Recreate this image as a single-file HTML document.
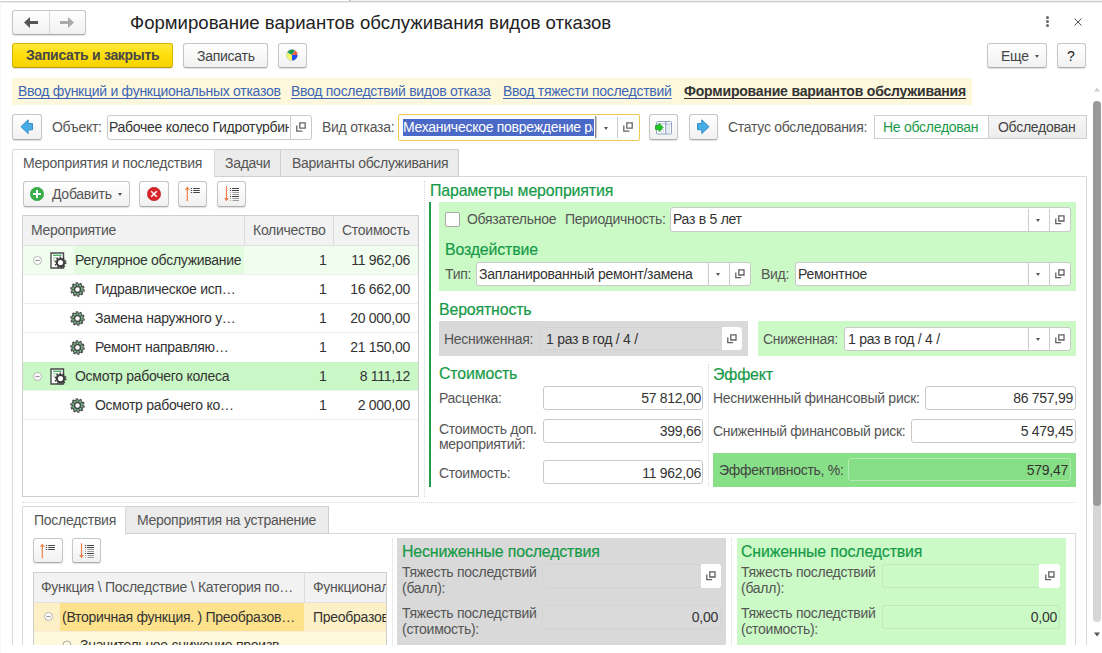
<!DOCTYPE html>
<html><head><meta charset="utf-8">
<style>
*{box-sizing:border-box;margin:0;padding:0}
html,body{width:1102px;height:653px;overflow:hidden;background:#fff;font-family:"Liberation Sans",sans-serif;font-size:14px;color:#555;letter-spacing:-0.27px}
.a{position:absolute;white-space:nowrap;line-height:13px}
.btn{position:absolute;border:1px solid #c6c6c6;border-bottom-color:#adadad;border-radius:3px;background:linear-gradient(#fff,#f1f1f1);box-shadow:0 1px 1px rgba(0,0,0,.12)}
.inp{position:absolute;border:1px solid #c9c9c9;border-radius:3px;background:#fff;overflow:hidden}
.gh{position:absolute;white-space:nowrap;color:#169a48;font-size:15.9px;line-height:15px;letter-spacing:-0.15px;-webkit-text-stroke:0.2px #169a48}
.lnk{color:#3d65b5;text-decoration:underline;text-decoration-skip-ink:none;text-decoration-thickness:1px;text-underline-offset:2px}
.val{color:#333}
.dd{position:absolute;width:0;height:0;border-left:2.5px solid transparent;border-right:2.5px solid transparent;border-top:3px solid #555}
.sep{position:absolute;width:1px;background:#cbcbcb}
.open{position:absolute;width:10px;height:10px}
</style></head><body>
<!-- frame -->
<div class="a" style="left:351px;top:0;width:751px;height:1px;background:#f2f2f2"></div><div class="a" style="left:349px;top:0;width:2px;height:1px;background:#c4c4c4"></div><div class="a" style="left:0;top:1px;width:1102px;height:1px;background:#d0d0d0"></div><div class="a" style="left:0;top:2px;width:1102px;height:1px;background:#ececec"></div>
<div class="a" style="left:0;top:2px;width:1px;height:651px;background:#f8f7ef"></div>

<!-- nav buttons -->
<div class="btn" style="left:12px;top:10px;width:74px;height:25px"></div>
<div class="a" style="left:49px;top:11px;width:1px;height:23px;background:#d8d8d8"></div>
<svg class="a" style="left:24px;top:17px" width="15" height="12" viewBox="0 0 15 12"><path d="M0 5.5 L6 0 L6 4 L14 4 L14 7 L6 7 L6 11 Z" fill="#555"/></svg>
<svg class="a" style="left:60px;top:17px" width="15" height="12" viewBox="0 0 15 12"><path d="M14 5.5 L8 0 L8 4 L0 4 L0 7 L8 7 L8 11 Z" fill="#aaa"/></svg>

<div class="a" style="left:130px;top:14px;font-size:18.6px;line-height:18px;color:#222;letter-spacing:0">Формирование вариантов обслуживания видов отказов</div>

<!-- right top icons -->
<div class="a" style="left:1046px;top:16px;width:3px;height:3px;border-radius:50%;background:#666"></div>
<div class="a" style="left:1046px;top:20px;width:3px;height:3px;border-radius:50%;background:#666"></div>
<div class="a" style="left:1046px;top:24px;width:3px;height:3px;border-radius:50%;background:#666"></div>
<svg class="a" style="left:1074px;top:18px" width="8" height="8" viewBox="0 0 8 8"><path d="M0.5 0.5 L7.5 7.5 M7.5 0.5 L0.5 7.5" stroke="#555" stroke-width="1"/></svg>

<!-- toolbar -->
<div class="btn" style="left:12px;top:43px;width:161px;height:25px;background:linear-gradient(#ffe83a,#ffde0a 50%,#f6d200);border-color:#d7b500;border-bottom-color:#b99b00"></div>
<div class="a" style="left:26px;top:49px;font-weight:bold;color:#474747;letter-spacing:-.3px">Записать и закрыть</div>
<div class="btn" style="left:183px;top:43px;width:85px;height:25px"></div>
<div class="a" style="left:197px;top:50px;color:#444">Записать</div>
<div class="btn" style="left:278px;top:43px;width:29px;height:25px"></div>
<svg class="a" style="left:286px;top:49px" width="12" height="12" viewBox="0 0 12 12"><path d="M6 6 L8.75 1.24 A5.5 5.5 0 0 1 11.5 6 Z" fill="#f55a45"/><path d="M6 6 L11.5 6 A5.5 5.5 0 0 1 6 11.5 Z" fill="#2250ee"/><path d="M6 6 L6 11.5 A5.5 5.5 0 0 1 1.24 3.25 Z" fill="#fbf76a"/><path d="M6 6 L1.24 3.25 A5.5 5.5 0 0 1 8.75 1.24 Z" fill="#1d9a52"/><circle cx="6" cy="6" r="5.6" fill="none" stroke="#7a8a9a" stroke-width="0.5" opacity=".6"/></svg>

<div class="btn" style="left:987px;top:43px;width:60px;height:25px"></div>
<div class="a" style="left:1001px;top:50px;color:#444">Еще</div>
<div class="dd" style="left:1035px;top:55px"></div>
<div class="btn" style="left:1057px;top:43px;width:29px;height:25px"></div>
<div class="a" style="left:1067px;top:50px;color:#222;font-size:14px">?</div>

<!-- yellow nav band -->
<div class="a" style="left:12px;top:78px;width:960px;height:27px;background:#fdf8dc"></div>
<div class="a lnk" style="left:18px;top:85px">Ввод функций и функциональных отказов</div>
<div class="a lnk" style="left:291px;top:85px">Ввод последствий видов отказа</div>
<div class="a lnk" style="left:503px;top:85px">Ввод тяжести последствий</div>
<div class="a" style="left:684px;top:85px;font-weight:bold;color:#333;text-decoration:underline;text-decoration-skip-ink:none;text-underline-offset:2px;letter-spacing:-.19px">Формирование вариантов обслуживания</div>

<!-- scrollbar -->
<svg class="a" style="left:1094px;top:87px" width="6" height="5"><path d="M0 4.5 L3 0.5 L6 4.5Z" fill="#cfcfcf"/></svg>
<div class="a" style="left:1093px;top:101px;width:8px;height:521px;border-radius:4px;background:#d6d6d6"></div>
<div class="a" style="left:1093px;top:101px;width:8px;height:405px;border-radius:4px;background:#9a9a9a"></div>
<svg class="a" style="left:1094px;top:632px" width="6" height="5"><path d="M0 0.5 L3 4.5 L6 0.5Z" fill="#555"/></svg>

<!-- object row -->
<div class="btn" style="left:12px;top:114px;width:30px;height:26px"></div>
<svg class="a" style="left:20px;top:119px" width="14" height="16" viewBox="0 0 14 16"><path d="M12.5 4.6 H8.2 V0.8 L1.4 7.2 Q0.9 7.7 1.4 8.2 L8.2 14.6 V10.8 H12.5 Z" fill="#46ade6" stroke="#2a86c2" stroke-width="0.9" stroke-linejoin="round"/></svg>
<div class="a" style="left:52px;top:121px">Объект:</div>
<div class="inp" style="left:107px;top:115px;width:205px;height:25px"></div><div class="sep" style="left:290px;top:116px;height:23px"></div>
<div class="a val" style="left:109px;top:121px;width:180px;overflow:hidden">Рабочее колесо Гидротурбины</div>
<svg class="open" style="left:296px;top:122px" viewBox="0 0 10 10"><path d="M3.8 0.8h5.4v5.4h-5.4z M0.8 3.6v5.6h5.6" fill="none" stroke="#666" stroke-width="1.3"/></svg>
<div class="a" style="left:322px;top:121px">Вид отказа:</div>
<div class="a" style="left:398px;top:114px;width:242px;height:27px;border:1px solid #f0c94a;background:#fff;border-radius:2px"></div>
<div class="a" style="left:403px;top:119px;width:191px;height:17px;background:#4b69c6"></div><div class="a" style="left:595px;top:116px;width:1px;height:22px;background:#8a8a8a"></div>
<div class="a" style="left:403px;top:121px;color:#fff;width:190px;overflow:hidden">Механическое повреждение рабочего</div>
<div class="sep" style="left:596px;top:117px;height:21px"></div>
<div class="dd" style="left:604px;top:127px"></div>
<div class="sep" style="left:617px;top:117px;height:21px"></div>
<svg class="open" style="left:623px;top:122px" viewBox="0 0 10 10"><path d="M3.8 0.8h5.4v5.4h-5.4z M0.8 3.6v5.6h5.6" fill="none" stroke="#666" stroke-width="1.3"/></svg>
<div class="btn" style="left:649px;top:114px;width:29px;height:26px"></div>
<svg class="a" style="left:655px;top:121px" width="17" height="14" viewBox="0 0 17 14"><rect x="1.5" y="0.5" width="15" height="12.5" rx="1" fill="#fff" stroke="#8ea2c2"/><path d="M2 3h14" stroke="#b9c6da" stroke-width="1.2"/><path d="M10.8 1v12" stroke="#8ea2c2" stroke-width="1.2"/><path d="M12.5 5h2.5M12.5 7h2.5M12.5 9h2.5M12.5 11h2.5M6 9h3M6 11h3" stroke="#8ea2c2" stroke-width="0.8" stroke-dasharray="1 0.8"/><path d="M0.5 4.5h3.5V2.3l4.2 4.2-4.2 4.2V8.5H0.5z" fill="#1ec81e" stroke="#0f8f1a" stroke-width="0.7" stroke-linejoin="round"/></svg>
<div class="btn" style="left:689px;top:114px;width:29px;height:26px"></div>
<svg class="a" style="left:696px;top:119px" width="14" height="16" viewBox="0 0 14 16"><path d="M1.5 4.6 H5.8 V0.8 L12.6 7.2 Q13.1 7.7 12.6 8.2 L5.8 14.6 V10.8 H1.5 Z" fill="#46ade6" stroke="#2a86c2" stroke-width="0.9" stroke-linejoin="round"/></svg>
<div class="a" style="left:728px;top:121px">Статус обследования:</div>
<div class="a" style="left:874px;top:115px;width:213px;height:24px;border:1px solid #cfcfcf;background:#fff"></div>
<div class="a" style="left:988px;top:116px;width:98px;height:22px;background:linear-gradient(#f6f6f6,#ececec);border-left:1px solid #cfcfcf"></div>
<div class="a" style="left:883px;top:121px;color:#1b9a4a">Не обследован</div>
<div class="a" style="left:998px;top:121px;color:#444">Обследован</div>

<!-- main tab panel -->
<div class="a" style="left:12px;top:176px;width:1075px;height:477px;border:1px solid #d9d9d9;border-bottom:none"></div>
<div class="a" style="left:12px;top:149px;width:203px;height:28px;border:1px solid #d9d9d9;border-bottom:none;background:#fff;border-radius:2px 2px 0 0"></div>
<div class="a" style="left:215px;top:149px;width:66px;height:28px;border:1px solid #cfcfcf;border-left:none;background:#ececec"></div>
<div class="a" style="left:281px;top:149px;width:178px;height:28px;border:1px solid #cfcfcf;border-left:none;background:#ececec"></div>
<div class="a" style="left:23px;top:157px">Мероприятия и последствия</div>
<div class="a" style="left:225px;top:157px">Задачи</div>
<div class="a" style="left:292px;top:157px">Варианты обслуживания</div>

<svg width="0" height="0" style="position:absolute">
<defs>
<g id="gear"><circle cx="7.5" cy="7.5" r="6.7" fill="none" stroke="#474747" stroke-width="1.2" stroke-dasharray="2.4 1.81"/><circle cx="7.5" cy="7.5" r="6.2" fill="#474747"/><circle cx="7.5" cy="7.5" r="4.5" fill="none" stroke="#76c08a" stroke-width="1.7" stroke-dasharray="2 0.8"/><circle cx="7.5" cy="7.5" r="3.2" fill="#474747"/><circle cx="7.5" cy="7.5" r="2.2" fill="#fff"/></g>
<g id="docgear"><path d="M1 1h12.5v15H1z" fill="#fff" stroke="#4a4a4a" stroke-width="1.4"/><path d="M3 3.3h8.5" stroke="#4bb36a" stroke-width="1.4"/><path d="M3 5.8h5M3 8h2" stroke="#8ccf9d" stroke-width="1.1"/><circle cx="10.5" cy="10.6" r="5.3" fill="none" stroke="#3a3a3a" stroke-width="1.4" stroke-dasharray="1.6 1.73"/><circle cx="10.5" cy="10.6" r="4.7" fill="#3a3a3a"/><circle cx="10.5" cy="10.6" r="2.6" fill="#fff"/></g>
<g id="minus"><circle cx="4.5" cy="4.5" r="4" fill="#fff" stroke="#b5b5b5" stroke-width="1"/><path d="M2.3 4.5h4.4" stroke="#9a9a9a" stroke-width="1.2"/></g>
<g id="openi"><path d="M3.8 0.8h5.2v5.2h-5.2z M0.8 3.4v5.3h5.3" fill="none" stroke="#606060" stroke-width="1.3"/></g>
<g id="sortup"><path d="M4.3 2.5v12.7" stroke="#f0804a" stroke-width="1.2"/><path d="M1.9 3.8 L4.3 0.4 L6.7 3.8Z" fill="#f0804a"/><path d="M7.8 2.5h1.3M7.8 4.5h1.3M7.8 6.5h1.3" stroke="#444" stroke-width="1.1"/><path d="M10.2 2.5h6.6M10.2 4.5h6.6M10.2 6.5h6.6" stroke="#444" stroke-width="1.2"/></g>
<g id="sortdn"><path d="M4.5 0.3v12.5" stroke="#f0804a" stroke-width="1.2"/><path d="M2.1 12 L4.5 15.3 L6.9 12Z" fill="#f0804a"/><path d="M7.9 2.5h1.2M7.9 4.5h1.2M7.9 10.5h1.2" stroke="#444" stroke-width="1.1"/><path d="M10 2.5h7M10 4.5h7M10 10.5h7" stroke="#444" stroke-width="1.2"/><path d="M8.2 6.5h.9M8.2 8.5h.9M8.2 12.5h.9M8.2 14.5h.9M10.5 6.5h6.5M10.5 8.5h6.5M10.5 12.5h6.5M10.5 14.5h6.5" stroke="#9a9a9a" stroke-width="1"/></g>
</defs></svg>

<!-- toolbar tab1 -->
<div class="btn" style="left:23px;top:181px;width:107px;height:26px"></div>
<svg class="a" style="left:30px;top:187px" width="14" height="14" viewBox="0 0 14 14"><circle cx="7" cy="7" r="6.7" fill="#3aae48" stroke="#2f9a3e" stroke-width=".6"/><path d="M7 3v8M3 7h8" stroke="#fff" stroke-width="2"/></svg>
<div class="a" style="left:52px;top:188px">Добавить</div>
<div class="dd" style="left:118px;top:193px"></div>
<div class="btn" style="left:139px;top:181px;width:30px;height:26px"></div>
<svg class="a" style="left:147px;top:187px" width="14" height="14" viewBox="0 0 14 14"><circle cx="7" cy="7" r="6.7" fill="#d8262b" stroke="#b81d22" stroke-width=".6"/><path d="M4.2 4.2l5.6 5.6M9.8 4.2l-5.6 5.6" stroke="#fff" stroke-width="1.5"/></svg>
<div class="btn" style="left:178px;top:181px;width:29px;height:26px"></div>
<svg class="a" style="left:183px;top:186px" width="19" height="16"><use href="#sortup"/></svg>
<div class="btn" style="left:217px;top:181px;width:29px;height:26px"></div>
<svg class="a" style="left:222px;top:186px" width="19" height="16"><use href="#sortdn"/></svg>

<!-- left table -->
<div class="a" style="left:22px;top:215px;width:397px;height:282px;border:1px solid #cfcfcf;background:#fff"></div>
<div class="a" style="left:23px;top:216px;width:395px;height:30px;background:#f2f2f2;border-bottom:1px solid #e2e2e2"></div>
<div class="a" style="left:244px;top:216px;width:1px;height:29px;background:#dcdcdc"></div>
<div class="a" style="left:333px;top:216px;width:1px;height:29px;background:#dcdcdc"></div>
<div class="a" style="left:31px;top:224px">Мероприятие</div>
<div class="a" style="left:253px;top:224px">Количество</div>
<div class="a" style="left:342px;top:224px">Стоимость</div>

<div class="a" style="left:23px;top:246px;width:395px;height:28px;background:#f1fdef"></div>
<div class="a" style="left:74px;top:246px;width:170px;height:28px;background:#e3fcdf"></div>
<div class="a" style="left:23px;top:274px;width:395px;height:1px;background:#eeeeee"></div>
<div class="a" style="left:23px;top:303px;width:395px;height:1px;background:#eeeeee"></div>
<div class="a" style="left:23px;top:332px;width:395px;height:1px;background:#eeeeee"></div>
<div class="a" style="left:23px;top:362px;width:395px;height:29px;background:#c9f7c5"></div>
<div class="a" style="left:23px;top:390px;width:395px;height:1px;background:#e6f5e4"></div>
<div class="a" style="left:23px;top:419px;width:395px;height:1px;background:#eeeeee"></div>

<svg class="a" style="left:33px;top:256px" width="10" height="10"><use href="#minus"/></svg>
<svg class="a" style="left:50px;top:252px" width="17" height="17"><use href="#docgear"/></svg>
<div class="a val" style="left:75px;top:254px">Регулярное обслуживание</div>
<div class="a val" style="left:319px;top:254px">1</div>
<div class="a val" style="left:340px;top:254px;width:70px;text-align:right">11 962,06</div>

<svg class="a" style="left:70px;top:282px" width="15" height="15"><use href="#gear"/></svg>
<div class="a val" style="left:95px;top:283px">Гидравлическое исп…</div>
<div class="a val" style="left:319px;top:283px">1</div>
<div class="a val" style="left:340px;top:283px;width:70px;text-align:right">16 662,00</div>

<svg class="a" style="left:70px;top:311px" width="15" height="15"><use href="#gear"/></svg>
<div class="a val" style="left:95px;top:312px">Замена наружного у…</div>
<div class="a val" style="left:319px;top:312px">1</div>
<div class="a val" style="left:340px;top:312px;width:70px;text-align:right">20 000,00</div>

<svg class="a" style="left:70px;top:340px" width="15" height="15"><use href="#gear"/></svg>
<div class="a val" style="left:95px;top:341px">Ремонт направляю…</div>
<div class="a val" style="left:319px;top:341px">1</div>
<div class="a val" style="left:340px;top:341px;width:70px;text-align:right">21 150,00</div>

<svg class="a" style="left:33px;top:372px" width="10" height="10"><use href="#minus"/></svg>
<svg class="a" style="left:50px;top:368px" width="17" height="17"><use href="#docgear"/></svg>
<div class="a val" style="left:75px;top:370px">Осмотр рабочего колеса</div>
<div class="a val" style="left:319px;top:370px">1</div>
<div class="a val" style="left:340px;top:370px;width:70px;text-align:right">8 111,12</div>

<svg class="a" style="left:70px;top:398px" width="15" height="15"><use href="#gear"/></svg>
<div class="a val" style="left:95px;top:399px">Осмотр рабочего ко…</div>
<div class="a val" style="left:319px;top:399px">1</div>
<div class="a val" style="left:340px;top:399px;width:70px;text-align:right">2 000,00</div>

<!-- separators -->
<div class="a" style="left:424px;top:181px;width:1px;height:316px;border-left:1px dotted #d8d8d8"></div>
<div class="a" style="left:22px;top:502px;width:1054px;height:1px;border-top:1px dotted #d8d8d8"></div>

<!-- right params -->
<div class="gh" style="left:430px;top:183px">Параметры мероприятия</div>
<div class="a" style="left:429px;top:202px;width:2px;height:285px;background:#1f9d4b"></div>
<div class="a" style="left:439px;top:202px;width:637px;height:89px;background:#cbfac6"></div>
<div class="a" style="left:445px;top:212px;width:15px;height:15px;border:1px solid #a9a9a9;border-radius:2px;background:#fff"></div>
<div class="a" style="left:467px;top:213px">Обязательное</div>
<div class="a" style="left:565px;top:213px">Периодичность:</div>
<div class="inp" style="left:670px;top:207px;width:401px;height:25px"></div>
<div class="a val" style="left:673px;top:213px">Раз в 5 лет</div>
<div class="sep" style="left:1028px;top:209px;height:22px"></div>
<div class="dd" style="left:1036px;top:219px"></div>
<div class="sep" style="left:1049px;top:209px;height:22px"></div>
<svg class="open" style="left:1055px;top:215px" viewBox="0 0 10 10"><use href="#openi"/></svg>

<div class="gh" style="left:445px;top:242px">Воздействие</div>
<div class="a" style="left:445px;top:268px">Тип:</div>
<div class="inp" style="left:476px;top:262px;width:275px;height:24px"></div>
<div class="a val" style="left:479px;top:268px">Запланированный ремонт/замена</div>
<div class="sep" style="left:708px;top:263px;height:22px"></div>
<div class="dd" style="left:716px;top:273px"></div>
<div class="sep" style="left:729px;top:263px;height:22px"></div>
<svg class="open" style="left:735px;top:269px" viewBox="0 0 10 10"><use href="#openi"/></svg>
<div class="a" style="left:761px;top:268px">Вид:</div>
<div class="inp" style="left:795px;top:262px;width:276px;height:24px"></div>
<div class="a val" style="left:798px;top:268px">Ремонтное</div>
<div class="sep" style="left:1028px;top:263px;height:22px"></div>
<div class="dd" style="left:1036px;top:273px"></div>
<div class="sep" style="left:1049px;top:263px;height:22px"></div>
<svg class="open" style="left:1055px;top:269px" viewBox="0 0 10 10"><use href="#openi"/></svg>

<div class="gh" style="left:439px;top:302px">Вероятность</div>
<div class="a" style="left:439px;top:321px;width:309px;height:35px;background:#d9d9d9"></div>
<div class="a" style="left:444px;top:333px">Несниженная:</div>
<div class="a" style="left:540px;top:327px;width:202px;height:23px;border:1px solid #d3d3d3;border-radius:3px;background:#dadada"></div>
<div class="a" style="left:722px;top:327px;width:20px;height:23px;background:#fff;border-radius:0 3px 3px 0"></div>
<div class="a val" style="left:546px;top:333px">1 раз в год / 4 /</div>
<svg class="open" style="left:727px;top:334px" viewBox="0 0 10 10"><use href="#openi"/></svg>
<div class="a" style="left:758px;top:321px;width:318px;height:35px;background:#cbfac6"></div>
<div class="a" style="left:763px;top:333px">Сниженная:</div>
<div class="inp" style="left:844px;top:327px;width:227px;height:24px"></div>
<div class="a val" style="left:848px;top:333px">1 раз в год / 4 /</div>
<div class="sep" style="left:1028px;top:328px;height:22px"></div>
<div class="dd" style="left:1036px;top:338px"></div>
<div class="sep" style="left:1049px;top:328px;height:22px"></div>
<svg class="open" style="left:1055px;top:334px" viewBox="0 0 10 10"><use href="#openi"/></svg>

<div class="gh" style="left:439px;top:366px">Стоимость</div>
<div class="a" style="left:439px;top:392px">Расценка:</div>
<div class="inp" style="left:543px;top:386px;width:160px;height:24px"></div>
<div class="a val" style="left:560px;top:392px;width:141px;text-align:right">57 812,00</div>
<div class="a" style="left:439px;top:423px">Стоимость доп.</div>
<div class="a" style="left:439px;top:438px">мероприятий:</div>
<div class="inp" style="left:543px;top:419px;width:160px;height:24px"></div>
<div class="a val" style="left:560px;top:425px;width:141px;text-align:right">399,66</div>
<div class="a" style="left:439px;top:467px">Стоимость:</div>
<div class="inp" style="left:543px;top:460px;width:160px;height:24px"></div>
<div class="a val" style="left:560px;top:467px;width:141px;text-align:right">11 962,06</div>
<div class="a" style="left:708px;top:364px;width:1px;height:122px;border-left:1px dotted #d8d8d8"></div>

<div class="gh" style="left:713px;top:367px">Эффект</div>
<div class="a" style="left:713px;top:392px">Несниженный финансовый риск:</div>
<div class="inp" style="left:925px;top:386px;width:151px;height:24px"></div>
<div class="a val" style="left:950px;top:392px;width:123px;text-align:right">86 757,99</div>
<div class="a" style="left:713px;top:425px">Сниженный финансовый риск:</div>
<div class="inp" style="left:911px;top:419px;width:165px;height:24px"></div>
<div class="a val" style="left:950px;top:425px;width:123px;text-align:right">5 479,45</div>
<div class="a" style="left:713px;top:453px;width:363px;height:34px;background:#87df87"></div>
<div class="a" style="left:848px;top:458px;width:223px;height:23px;border:1px solid #b3ebb3;border-radius:3px;background:#86de86"></div>
<div class="a" style="left:719px;top:464px;color:#444">Эффективность, %:</div>
<div class="a val" style="left:940px;top:464px;width:128px;text-align:right">579,47</div>

<!-- bottom sub tabs -->
<div class="a" style="left:22px;top:533px;width:1054px;height:120px;border:1px solid #d9d9d9;border-bottom:none"></div>
<div class="a" style="left:22px;top:506px;width:104px;height:28px;border:1px solid #d9d9d9;border-bottom:none;background:#fff;border-radius:2px 2px 0 0"></div>
<div class="a" style="left:126px;top:506px;width:203px;height:28px;border:1px solid #cfcfcf;border-left:none;background:#ececec"></div>
<div class="a" style="left:34px;top:514px">Последствия</div>
<div class="a" style="left:137px;top:514px">Мероприятия на устранение</div>
<div class="btn" style="left:33px;top:538px;width:30px;height:25px"></div>
<svg class="a" style="left:38px;top:543px" width="19" height="16"><use href="#sortup"/></svg>
<div class="btn" style="left:72px;top:538px;width:29px;height:25px"></div>
<svg class="a" style="left:77px;top:543px" width="19" height="16"><use href="#sortdn"/></svg>

<div class="a" style="left:33px;top:572px;width:354px;height:81px;border:1px solid #cfcfcf;border-bottom:none;background:#fef8dd;overflow:hidden"></div>
<div class="a" style="left:34px;top:573px;width:352px;height:30px;background:#f2f2f2;border-bottom:1px solid #e2e2e2"></div>
<div class="a" style="left:304px;top:573px;width:1px;height:29px;background:#dcdcdc"></div>
<div class="a" style="left:41px;top:581px">Функция \ Последствие \ Категория по…</div>
<div class="a" style="left:313px;top:581px;width:73px;overflow:hidden">Функционал</div>
<div class="a" style="left:34px;top:603px;width:352px;height:28px;background:#fdf0c6"></div>
<div class="a" style="left:60px;top:603px;width:244px;height:28px;background:#fde18b"></div>
<div class="a" style="left:34px;top:631px;width:352px;height:1px;background:#f5edd5"></div>
<svg class="a" style="left:44px;top:612px" width="10" height="10"><use href="#minus"/></svg>
<div class="a val" style="left:62px;top:611px">(Вторичная функция. ) Преобразов…</div>
<div class="a val" style="left:313px;top:611px;width:73px;overflow:hidden">Преобразование</div>
<svg class="a" style="left:62px;top:640px" width="10" height="10"><circle cx="5" cy="5" r="4" fill="none" stroke="#aaa"/></svg>
<div class="a val" style="left:80px;top:639px">Значительное снижение произв…</div>

<div class="a" style="left:392px;top:538px;width:1px;height:107px;border-left:1px dotted #d8d8d8"></div>
<div class="a" style="left:397px;top:538px;width:329px;height:107px;background:#d9d9d9"></div>
<div class="gh" style="left:402px;top:544px">Несниженные последствия</div>
<div class="a" style="left:402px;top:566px">Тяжесть последствий</div>
<div class="a" style="left:402px;top:582px">(балл):</div>
<div class="a" style="left:542px;top:564px;width:179px;height:24px;border:1px solid #d3d3d3;border-radius:3px;background:#dadada"></div>
<div class="a" style="left:701px;top:564px;width:20px;height:24px;background:#fff;border-radius:0 3px 3px 0"></div>
<svg class="open" style="left:706px;top:571px" viewBox="0 0 10 10"><use href="#openi"/></svg>
<div class="a" style="left:402px;top:607px">Тяжесть последствий</div>
<div class="a" style="left:402px;top:623px">(стоимость):</div>
<div class="a" style="left:542px;top:605px;width:179px;height:24px;border:1px solid #d3d3d3;border-radius:3px;background:#dadada"></div>
<div class="a val" style="left:640px;top:611px;width:78px;text-align:right">0,00</div>

<div class="a" style="left:731px;top:538px;width:1px;height:107px;border-left:1px dotted #d8d8d8"></div>
<div class="a" style="left:737px;top:538px;width:329px;height:107px;background:#cbfac6"></div>
<div class="gh" style="left:741px;top:544px">Сниженные последствия</div>
<div class="a" style="left:741px;top:566px">Тяжесть последствий</div>
<div class="a" style="left:741px;top:582px">(балл):</div>
<div class="a" style="left:882px;top:564px;width:178px;height:24px;border:1px solid #c2e6bd;border-radius:3px;background:#cbfac6"></div>
<div class="a" style="left:1039px;top:564px;width:21px;height:24px;background:#fff;border-radius:0 3px 3px 0"></div>
<svg class="open" style="left:1045px;top:571px" viewBox="0 0 10 10"><use href="#openi"/></svg>
<div class="a" style="left:741px;top:607px">Тяжесть последствий</div>
<div class="a" style="left:741px;top:623px">(стоимость):</div>
<div class="a" style="left:882px;top:605px;width:178px;height:24px;border:1px solid #c2e6bd;border-radius:3px;background:#cbfac6"></div>
<div class="a val" style="left:980px;top:611px;width:77px;text-align:right">0,00</div>

<!-- clip bottom -->
<div class="a" style="left:1px;top:645px;width:1090px;height:8px;background:#fff"></div>
</body></html>
